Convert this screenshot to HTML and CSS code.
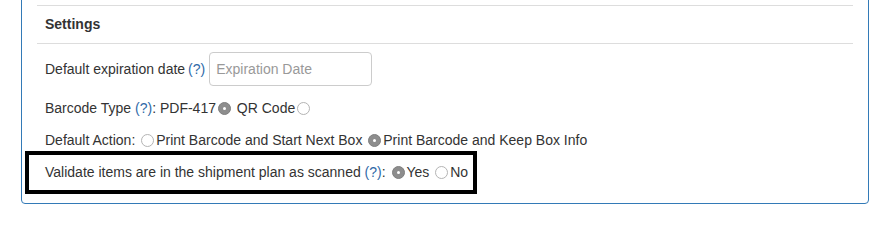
FILE: index.html
```html
<!DOCTYPE html>
<html lang="en">
<head>
    <meta charset="UTF-8">
    <title>Settings</title>
    <link rel="stylesheet" href="styles.css">
</head>
<body>
    <div class="panel">
        <div class="section">
            <div class="section-title">Settings</div>
            <div class="row row-input">
                Default expiration date <a class="help">(?)</a>
                <input type="text" class="date" placeholder="Expiration Date">
            </div>
            <div class="row">
                Barcode Type <a class="help">(?)</a>: PDF-417<input type="radio" name="btype" checked> QR Code<input type="radio" name="btype">
            </div>
            <div class="row">
                Default Action: <input type="radio" name="action">Print Barcode and Start Next Box <input type="radio" name="action" checked>Print Barcode and Keep Box Info
            </div>
            <div class="row highlight">
                Validate items are in the shipment plan as scanned <a class="help">(?)</a>: <input type="radio" name="validate" checked>Yes <input type="radio" name="validate">No
            </div>
        </div>
    </div>
</body>
</html>
```

FILE: styles.css
```css
body {
    margin: 0;
    background: #fff;
    font-family: "Liberation Sans", Arial, sans-serif;
    font-size: 14px;
    line-height: 20px;
    color: #333;
}
.panel {
    margin: -11px 0 0 21px;
    width: 816px;
    padding: 15px 15px 15px;
    border: 1px solid #337ab7;
    border-radius: 4px;
}
.section {
    padding-bottom: 6px;
}
.section-title {
    padding: 8px 8px 9px;
    border-top: 1px solid #ddd;
    border-bottom: 1px solid #ddd;
    font-weight: bold;
}
.row {
    padding: 0 8px;
    margin-top: 12px;
    height: 20px;
    white-space: nowrap;
}
.row-input {
    margin-top: 8px;
    height: 34px;
    display: flex;
    align-items: center;
    gap: 4px;
}
.row-input .help {
    margin-left: -1px;
}
.help {
    color: #2f6aa8;
}
input.date {
    box-sizing: border-box;
    width: 163px;
    height: 34px;
    padding: 6px 6px;
    border: 1px solid #ccc;
    border-radius: 4px;
    font-family: inherit;
    font-size: 14px;
    color: #555;
}
input.date::placeholder {
    color: #999;
}
input[type="radio"] {
    appearance: none;
    -webkit-appearance: none;
    box-sizing: border-box;
    width: 13px;
    height: 13px;
    margin: 0 2px;
    border: 1px solid #b4b4b4;
    border-radius: 50%;
    background: #fff;
    vertical-align: -2px;
    position: relative;
}
input[type="radio"]:checked {
    background: #8d8d8d;
    border-color: #7f7f7f;
}
input[type="radio"]:checked::after {
    content: "";
    position: absolute;
    left: 4px;
    top: 4px;
    width: 3px;
    height: 3px;
    border-radius: 50%;
    background: #fff;
}
.highlight {
    position: relative;
}
.highlight::after {
    content: "";
    position: absolute;
    left: -12px;
    top: -11px;
    width: 444px;
    height: 35px;
    border: 4px solid #000;
}
```
